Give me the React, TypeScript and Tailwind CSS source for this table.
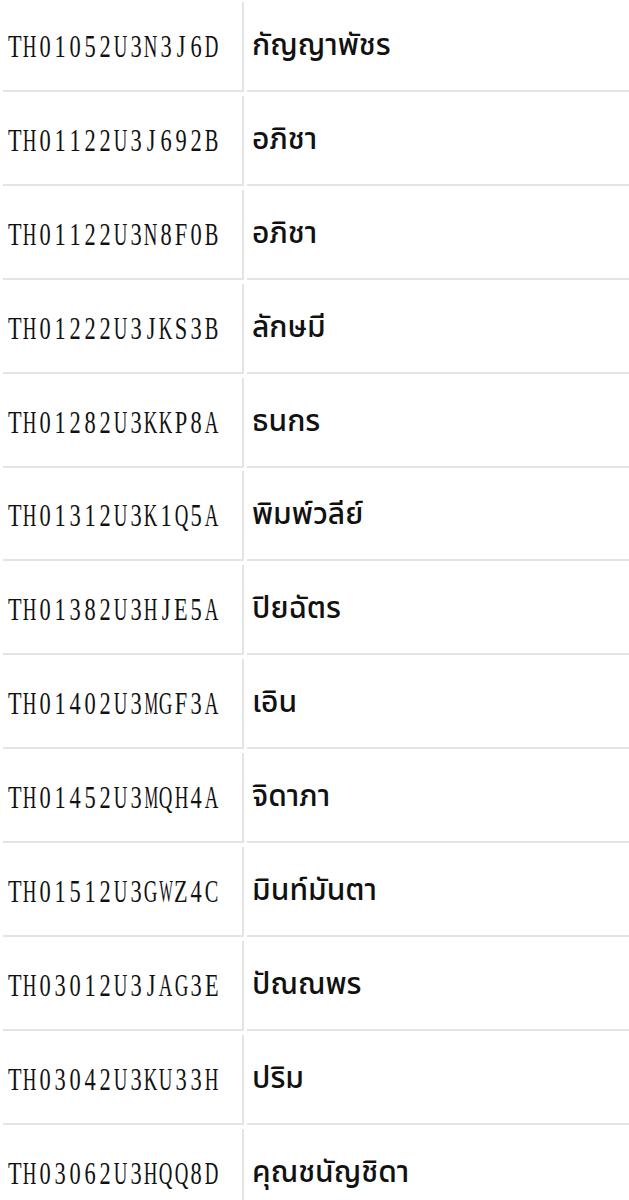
import React from "react";

const rows: [string, string][] = [
  ["TH01052U3N3J6D", "กัญญาพัชร"],
  ["TH01122U3J692B", "อภิชา"],
  ["TH01122U3N8F0B", "อภิชา"],
  ["TH01222U3JKS3B", "ลักษมี"],
  ["TH01282U3KKP8A", "ธนกร"],
  ["TH01312U3K1Q5A", "พิมพ์วลีย์"],
  ["TH01382U3HJE5A", "ปิยฉัตร"],
  ["TH01402U3MGF3A", "เอิน"],
  ["TH01452U3MQH4A", "จิดาภา"],
  ["TH01512U3GWZ4C", "มินท์มันตา"],
  ["TH03012U3JAG3E", "ปัณณพร"],
  ["TH03042U3KU33H", "ปริม"],
  ["TH03062U3HQQ8D", "คุณชนัญชิดา"],
];

const widths: Record<string, number> = {
  T: 611, H: 722, D: 722, N: 722, U: 722, J: 389, B: 667, F: 556, K: 722,
  S: 556, P: 556, A: 722, Q: 722, E: 611, M: 889, G: 722, W: 944, Z: 611, C: 667,
};

const FS = 32;

function Code({ text }: { text: string }) {
  return (
    <span
      className="inline-flex text-[32px] text-[#111] leading-none"
      style={{ fontFamily: '"Liberation Serif", "Times New Roman", serif' }}
    >
      {text.split("").map((c, i) => {
        const w = ((widths[c] ?? 500) * FS) / 1000;
        const s = Math.min(0.7, 13.6 / w);
        return (
          <span key={i} className="flex w-[15.15px] justify-center">
            <span className="inline-block shrink-0" style={{ transform: `scaleX(${s})` }}>
              {c}
            </span>
          </span>
        );
      })}
    </span>
  );
}

export default function App() {
  return (
    <div className="w-[629px] h-[1200px] overflow-hidden bg-white pl-[3px] pt-[2px]">
      <div className="flex flex-col gap-y-[3.9px]">
        {rows.map(([code, name], i) => (
          <div key={i} className="grid grid-cols-[241px_1fr] gap-x-[3px]">
            <div className="h-[90px] border-r-2 border-b-2 border-[#e4e4e4] flex items-center pl-[4px] overflow-hidden">
              <Code text={code} />
            </div>
            <div className="h-[90px] border-b-2 border-[#e4e4e4] flex items-center pl-[5px] mr-[-10px]">
              <span
                className="text-[30px] font-medium text-[#111] leading-none"
                style={{ fontFamily: '"Noto Sans Thai", "Noto Sans", "DejaVu Sans", sans-serif' }}
              >
                {name}
              </span>
            </div>
          </div>
        ))}
      </div>
    </div>
  );
}
